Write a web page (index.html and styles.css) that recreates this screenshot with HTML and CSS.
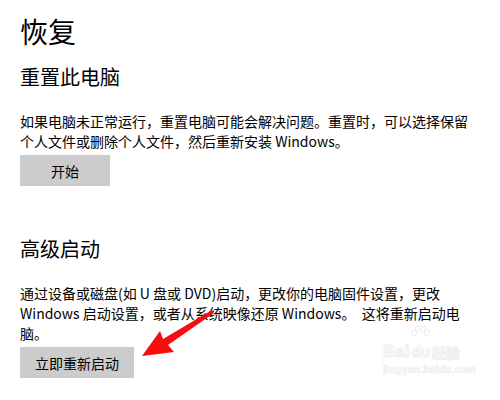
FILE: index.html
```html
<!DOCTYPE html>
<html lang="zh-CN">
<head>
<meta charset="utf-8">
<title>恢复</title>
<link rel="stylesheet" href="styles.css">
</head>
<body>
<main class="page">
  <h1 class="title">恢复</h1>
  <section class="section reset">
    <h2 class="heading">重置此电脑</h2>
    <p class="desc">如果电脑未正常运行，重置电脑可能会解决问题。重置时，可以选择保留个人文件或删除个人文件，然后重新安装 Windows。</p>
    <button class="btn btn-start">开始</button>
  </section>
  <section class="section advanced">
    <h2 class="heading">高级启动</h2>
    <p class="desc">通过设备或磁盘(如 U 盘或 DVD)启动，更改你的电脑固件设置，更改 Windows 启动设置，或者从系统映像还原 Windows。&nbsp; 这将重新启动电脑。</p>
    <button class="btn">立即重新启动</button>
  </section>
</main>
<svg class="arrow" width="500" height="400" viewBox="0 0 500 400">
  <polygon points="142,356 160,331 163,339 212,310 214,313 168,345 174,352" fill="#f70d0d"/>
</svg>
<div class="watermark">
  <div class="wm-top">
    <span class="wm-bai">Bai</span>
    <span class="wm-du"><svg class="paw" width="22" height="20" viewBox="0 0 22 20"><g fill="#fff" stroke="#eeeeee" stroke-width="1"><ellipse cx="5" cy="8" rx="2.5" ry="3"/><ellipse cx="9" cy="4" rx="2.5" ry="3"/><ellipse cx="14" cy="4" rx="2.5" ry="3"/><ellipse cx="18" cy="8" rx="2.5" ry="3"/></g></svg>du</span>
    <span class="wm-jy">经验</span>
  </div>
  <div class="wm-url">jingyan.baidu.com</div>
</div>
</body>
</html>
```
FILE: styles.css
```css
html, body {
  margin: 0;
  padding: 0;
  background: #fff;
}
body {
  width: 500px;
  height: 400px;
  overflow: hidden;
  position: relative;
  font-family: "Noto Sans CJK SC", "Noto Sans", sans-serif;
  color: #000;
}
.page {
  padding: 17px 0 0 20px;
  width: 450px;
}
.title {
  margin: 0;
  font-size: 28px;
  line-height: 28px;
  font-weight: 400;
}
.heading {
  margin: 0;
  font-size: 20px;
  line-height: 20px;
  font-weight: 400;
}
.reset .heading {
  margin-top: 22px;
}
.advanced .heading {
  margin-top: 53px;
}
.desc {
  margin: 24px 0 0;
  font-size: 14px;
  line-height: 20px;
}
.btn {
  display: block;
  margin-top: 4px;
  min-width: 90px;
  height: 31px;
  padding: 0 15px;
  border: 0;
  background: #cccccc;
  font-family: inherit;
  font-size: 14px;
  color: #000;
}
.arrow {
  position: absolute;
  left: 0;
  top: 0;
  pointer-events: none;
}
.watermark {
  position: absolute;
  left: 383px;
  top: 343px;
  width: 92px;
  font-family: "Liberation Sans", sans-serif;
  color: #fff;
  -webkit-text-stroke: 1px #ededed;
}
.wm-top {
  display: flex;
  align-items: flex-end;
  gap: 2px;
  font-size: 17px;
  font-weight: 700;
  line-height: 18px;
}
.wm-du {
  position: relative;
  font-size: 15px;
}
.paw {
  position: absolute;
  left: -2px;
  top: -18px;
}
.wm-jy {
  font-family: "Noto Sans CJK SC", sans-serif;
  font-size: 14px;
}
.wm-url {
  margin-top: 3px;
  font-size: 10px;
  font-weight: 700;
  letter-spacing: 0.3px;
  color: #f6f6f6;
  -webkit-text-stroke: 0.6px #eeeeee;
}
```
